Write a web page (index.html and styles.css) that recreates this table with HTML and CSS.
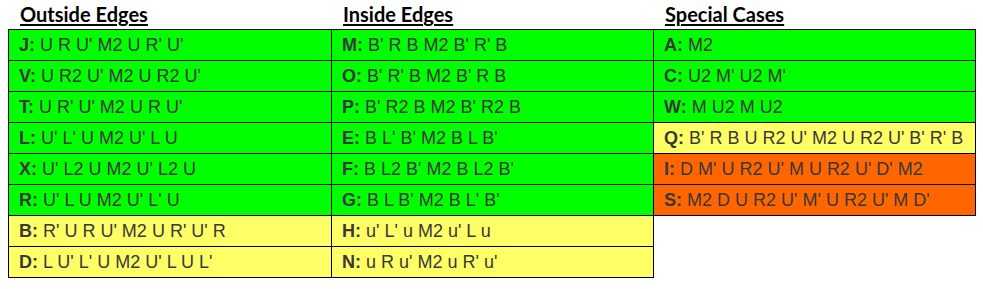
FILE: index.html
```html
<!DOCTYPE html>
<html>
<head>
<meta charset="utf-8">
<link rel="stylesheet" href="styles.css">
</head>
<body>
<div class="sheet">
  <div class="col col-first">
    <div class="heading">Outside Edges</div>
    <div class="list">
      <div class="cell green"><b>J:</b> U R U' M2 U R' U'</div>
      <div class="cell green"><b>V:</b> U R2 U' M2 U R2 U'</div>
      <div class="cell green"><b>T:</b> U R' U' M2 U R U'</div>
      <div class="cell green"><b>L:</b> U' L' U M2 U' L U</div>
      <div class="cell green"><b>X:</b> U' L2 U M2 U' L2 U</div>
      <div class="cell green"><b>R:</b> U' L U M2 U' L' U</div>
      <div class="cell yellow"><b>B:</b> R' U R U' M2 U R' U' R</div>
      <div class="cell yellow"><b>D:</b> L U' L' U M2 U' L U L'</div>
    </div>
  </div>
  <div class="col">
    <div class="heading">Inside Edges</div>
    <div class="list">
      <div class="cell green"><b>M:</b> B' R B M2 B' R' B</div>
      <div class="cell green"><b>O:</b> B' R' B M2 B' R B</div>
      <div class="cell green"><b>P:</b> B' R2 B M2 B' R2 B</div>
      <div class="cell green"><b>E:</b> B L' B' M2 B L B'</div>
      <div class="cell green"><b>F:</b> B L2 B' M2 B L2 B'</div>
      <div class="cell green"><b>G:</b> B L B' M2 B L' B'</div>
      <div class="cell yellow"><b>H:</b> u' L' u M2 u' L u</div>
      <div class="cell yellow"><b>N:</b> u R u' M2 u R' u'</div>
    </div>
  </div>
  <div class="col">
    <div class="heading">Special Cases</div>
    <div class="list">
      <div class="cell green"><b>A:</b> M2</div>
      <div class="cell green"><b>C:</b> U2 M' U2 M'</div>
      <div class="cell green"><b>W:</b> M U2 M U2</div>
      <div class="cell yellow"><b>Q:</b> B' R B U R2 U' M2 U R2 U' B' R' B</div>
      <div class="cell orange"><b>I:</b> D M' U R2 U' M U R2 U' D' M2</div>
      <div class="cell orange"><b>S:</b> M2 D U R2 U' M' U R2 U' M D'</div>
    </div>
  </div>
</div>
</body>
</html>
```

FILE: styles.css
```css
html, body {
  margin: 0;
  padding: 0;
  background: #ffffff;
}

.sheet {
  display: grid;
  grid-template-columns: 324px 322px 322px;
  align-items: start;
  padding-left: 8px;
}

.heading {
  height: 29px;
  box-sizing: border-box;
  padding-left: 12px;
  padding-top: 4px;
  font-family: Lato, "Open Sans", sans-serif;
  font-weight: 700;
  font-size: 20px;
  line-height: 20px;
  color: #000;
  text-decoration: underline;
  text-decoration-thickness: 2px;
  text-underline-offset: 2px;
  white-space: nowrap;
}

.list {
  display: flex;
  flex-direction: column;
  border-top: 1px solid #000;
}

.col-first .list {
  border-left: 1px solid #000;
}

.col + .col .heading {
  padding-left: 11px;
}

.cell {
  height: 30px;
  border-right: 1px solid #000;
  border-bottom: 1px solid #000;
  padding-left: 10px;
  font-family: "Liberation Sans", Arial, sans-serif;
  font-size: 18px;
  line-height: 30px;
  color: #383838;
  white-space: nowrap;
}

.cell b {
  font-weight: 700;
}

.green { background: #00ff00; }
.yellow { background: #ffff66; }
.orange { background: #ff6600; }
```
